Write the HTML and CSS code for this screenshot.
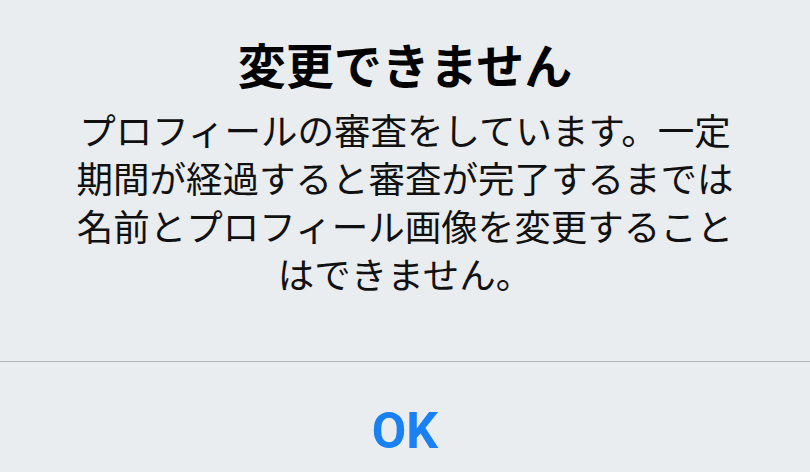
FILE: index.html
```html
<!DOCTYPE html>
<html lang="ja">
  <head>
    <meta charset="UTF-8" />
    <meta name="viewport" content="width=device-width, initial-scale=1.0" />
    <title>変更できません</title>
    <link rel="stylesheet" href="styles.css">
  </head>

  <body>
    <div class="alert">
      <div class="alert-content">
        <h1 class="alert-title">変更できません</h1>
        <p class="alert-message">
          プロフィールの審査をしています。一定期間が経過すると審査が完了するまでは名前とプロフィール画像を変更することはできません。
        </p>
      </div>
      <div class="alert-action">
        <button class="ok-btn" type="button">OK</button>
      </div>
    </div>
  </body>
</html>
```

FILE: styles.css
```css
html,
body {
  padding: 0;
  margin: 0;
}
body {
  background: #eaedf0;
  font-family: "Noto Sans CJK JP", "Noto Sans", sans-serif;
  color: #000;
}
.alert {
  display: flex;
  flex-direction: column;
  width: 810px;
  height: 472px;
  overflow: hidden;
  .alert-content {
    height: 361px;
    box-sizing: border-box;
    padding-top: 35px;
    text-align: center;
  }
  .alert-title {
    margin: 0;
    font-size: 48px;
    line-height: 56px;
    font-weight: 700;
  }
  .alert-message {
    width: 680px;
    margin: 15px auto 0;
    font-size: 36.5px;
    line-height: 48px;
    color: #111;
  }
  .alert-action {
    flex: 1;
    display: flex;
    justify-content: center;
    border-top: 1px solid #b4b6b9;
    padding-top: 39px;
    .ok-btn {
      border: none;
      background: none;
      padding: 0;
      font-family: Roboto, "Liberation Sans", sans-serif;
      font-size: 50px;
      line-height: 60px;
      font-weight: 700;
      color: #1a80f5;
      height: 60px;
      cursor: pointer;
    }
  }
}
```
